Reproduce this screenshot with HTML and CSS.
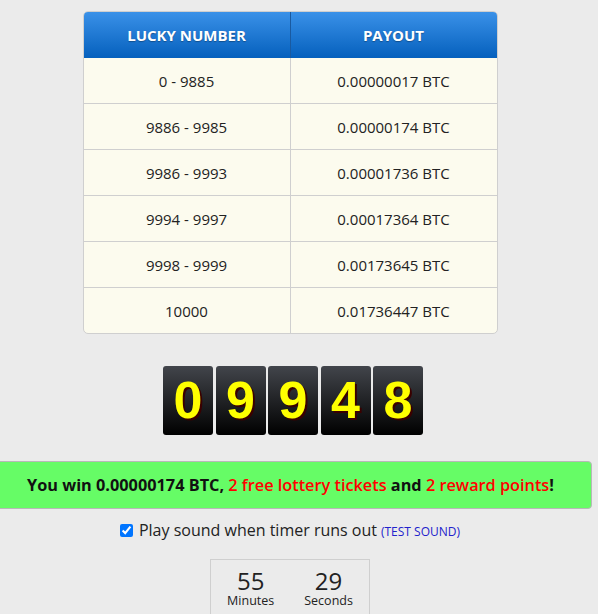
FILE: index.html
```html
<!DOCTYPE html>
<html lang="en">

<head>
  <meta charset="UTF-8">
  <title>Free BTC</title>
  <link rel="stylesheet" href="styles.css">
</head>

<body>
  <div id="sayfa">
    <table id="odemeler">
      <thead>
        <tr>
          <th>LUCKY NUMBER</th>
          <th>PAYOUT</th>
        </tr>
      </thead>
      <tbody>
        <tr><td>0 - 9885</td><td>0.00000017 BTC</td></tr>
        <tr><td>9886 - 9985</td><td>0.00000174 BTC</td></tr>
        <tr><td>9986 - 9993</td><td>0.00001736 BTC</td></tr>
        <tr><td>9994 - 9997</td><td>0.00017364 BTC</td></tr>
        <tr><td>9998 - 9999</td><td>0.00173645 BTC</td></tr>
        <tr><td>10000</td><td>0.01736447 BTC</td></tr>
      </tbody>
    </table>

    <div id="rakamlar">
      <div class="rakam">0</div>
      <div class="rakam">9</div>
      <div class="rakam">9</div>
      <div class="rakam">4</div>
      <div class="rakam">8</div>
    </div>

    <div id="kazanc">
      You win 0.00000174 BTC, <span class="kirmizi">2 free lottery tickets</span> and <span class="kirmizi">2 reward points</span>!
    </div>

    <div id="ses">
      <input type="checkbox" checked> Play sound when timer runs out <a href="#" id="test">(TEST SOUND)</a>
    </div>

    <div id="sayac">
      <div class="birim"><span class="sayi">55</span><span class="etiket">Minutes</span></div>
      <div class="birim"><span class="sayi">29</span><span class="etiket">Seconds</span></div>
    </div>
  </div>
</body>

</html>
```

FILE: styles.css
```css
/* GENEL */
body {
  margin: 0;
  background-color: #ebebeb;
  font-family: "Open Sans", "Liberation Sans", sans-serif;
  color: #222;
  overflow: hidden;
}

#sayfa {
  width: 580px;
  display: flex;
  flex-direction: column;
  align-items: center;
  padding-top: 11px;
}

/* TABLO */
#odemeler {
  width: 415px;
  border-collapse: separate;
  border-spacing: 0;
  border: 1px solid #cfcfcf;
  border-radius: 5px;
  overflow: hidden;
  background-color: #fcfbee;
  font-size: 15px;
}

#odemeler th {
  height: 46px;
  padding: 0;
  color: white;
  font-size: 15px;
  font-weight: bold;
  background: linear-gradient(#3a91e8, #0560bd);
  text-shadow: 0 1px 1px rgba(0, 0, 0, 0.3);
}

#odemeler th + th {
  border-left: 1px solid #1a5aa0;
}

#odemeler td {
  height: 45px;
  padding: 0;
  text-align: center;
  border-top: 1px solid #cfcfcf;
}

#odemeler tbody tr:first-child td {
  border-top: none;
}

#odemeler td + td {
  border-left: 1px solid #cfcfcf;
}

#odemeler td:first-child {
  width: 206px;
}

/* RAKAMLAR */
#rakamlar {
  display: flex;
  gap: 2.5px;
  margin-top: 32px;
  margin-left: 6px;
}

.rakam {
  width: 50px;
  height: 69px;
  border-radius: 3px;
  background: linear-gradient(#42454b, #000);
  color: #ffff00;
  font-family: "Liberation Sans", Arial, sans-serif;
  font-weight: bold;
  font-size: 52px;
  line-height: 69px;
  text-align: center;
  text-shadow: 2px 2px 0 #3a0000;
}

/* KAZANÇ */
#kazanc {
  align-self: flex-start;
  box-sizing: border-box;
  width: 597px;
  margin-left: -5px;
  margin-top: 26px;
  height: 48px;
  line-height: 46px;
  background-color: #66fc66;
  border: 1px solid #b8b8b8;
  border-radius: 4px;
  text-align: center;
  font-weight: bold;
  font-size: 16.3px;
  color: #111;
  padding-right: 6px;
}

.kirmizi {
  color: #ff0000;
  font-weight: 600;
}

/* SES */
#ses {
  margin-top: 10px;
  font-size: 16px;
  display: flex;
  align-items: center;
  gap: 4px;
}

#ses input {
  margin: 0 2px 0 0;
  width: 13px;
  height: 13px;
}

#test {
  color: #2222cc;
  font-size: 12px;
  text-decoration: none;
  margin-top: 2px;
}

/* SAYAÇ */
#sayac {
  margin-top: 18px;
  width: 158px;
  height: 60px;
  border: 1px solid #cfcfcf;
  display: flex;
  justify-content: center;
  gap: 30px;
  padding-top: 10px;
}

.birim {
  display: flex;
  flex-direction: column;
  align-items: center;
}

.sayi {
  font-size: 24px;
  line-height: 22px;
}

.etiket {
  font-size: 12.5px;
  line-height: 18px;
}
```
